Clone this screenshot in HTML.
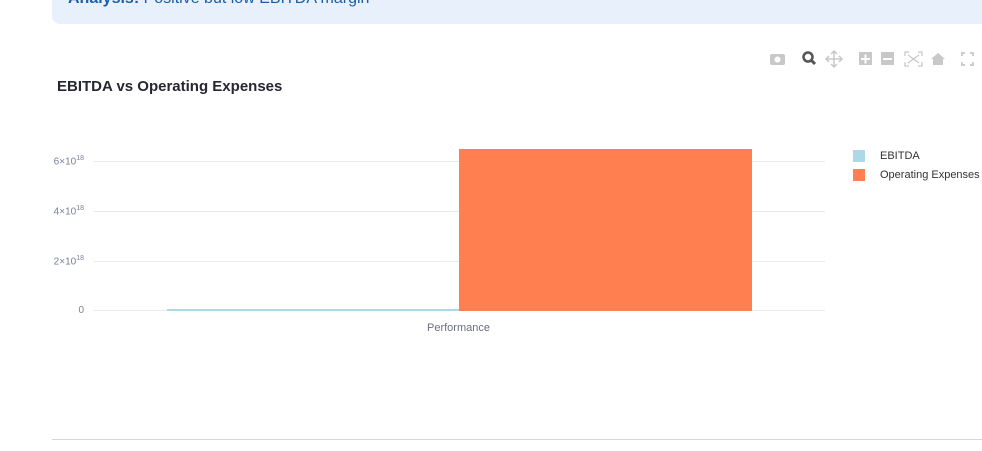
<!DOCTYPE html>
<html><head><style>
body{margin:0;width:982px;height:451px;overflow:hidden;background:#fff;font-family:"Liberation Sans",sans-serif;position:relative}
.box{position:absolute;left:52px;top:-20px;width:940px;height:44px;background:#e7f0fb;border-radius:8px}
.box span{position:absolute;left:16px;top:10px;font-size:16px;color:#1a5fa6}
.title{position:absolute;left:57px;top:78px;font-size:15px;font-weight:bold;color:#262730}
.grid{position:absolute;left:94px;width:731px;height:1px;background:#e8e8ee}
.yl{position:absolute;right:898px;font-size:10px;color:#7a7f96;text-align:right}
.yl sup{font-size:7px}
</style></head><body>
<div class="box"><span><b>Analysis:</b> Positive but low EBITDA margin</span></div>
<div class="title">EBITDA vs Operating Expenses</div>
<div class="grid" style="top:161px"></div>
<div class="grid" style="top:211px"></div>
<div class="grid" style="top:261px"></div>
<div class="grid" style="top:310px"></div>
<div class="yl" style="top:155px">6×10<sup>18</sup></div>
<div class="yl" style="top:205px">4×10<sup>18</sup></div>
<div class="yl" style="top:255px">2×10<sup>18</sup></div>
<div class="yl" style="top:305px">0</div>
<div style="position:absolute;left:167px;top:309px;width:292px;height:2px;background:#add8e6"></div>
<div style="position:absolute;left:459px;top:149px;width:293px;height:162px;background:#ff7f50"></div>
<div style="position:absolute;left:427px;top:322px;font-size:11px;color:#6b6f80">Performance</div>
<div style="position:absolute;left:853px;top:150px;width:12px;height:12px;background:#add8e6"></div>
<div style="position:absolute;left:853px;top:169px;width:12px;height:12px;background:#ff7f50"></div>
<div style="position:absolute;left:880px;top:150px;font-size:11px;color:#333">EBITDA</div>
<div style="position:absolute;left:880px;top:169px;font-size:11px;color:#333">Operating Expenses</div>
<svg style="position:absolute;left:768px;top:50px" width="210" height="18" viewBox="0 0 210 18">
<g fill="#c8c8c8">
<rect x="2" y="4" width="15" height="11" rx="2"/><circle cx="9.5" cy="9.5" r="3" fill="#fff"/>
<rect x="91" y="2" width="13" height="13"/><rect x="113" y="2" width="13" height="13"/>
<path d="M170 3 l7 6 h-2 v6 h-10 v-6 h-2z"/>
</g>
<g fill="#fff"><rect x="93" y="8" width="9" height="2"/><rect x="96.5" y="4.5" width="2" height="9"/><rect x="115" y="8" width="9" height="2"/></g>
<circle cx="40" cy="7" r="4.5" fill="none" stroke="#555" stroke-width="2.5"/><path d="M43 10 l4 4" stroke="#555" stroke-width="3"/>
<path d="M66 1v16M58 9h16M63 4l3-3 3 3M63 14l3 3 3-3M61 6l-3 3 3 3M71 6l3 3-3 3" stroke="#c8c8c8" fill="none" stroke-width="1.5"/>
<path d="M137 6v-4h4M150 2h4v4M154 12v4h-4M141 16h-4v-4M140 5l11 8M151 5l-11 8" stroke="#c8c8c8" fill="none" stroke-width="1.3"/>
<path d="M194 6v-3h3M202 3h3v3M205 12v3h-3M197 15h-3v-3" stroke="#c8c8c8" fill="none" stroke-width="1.8"/>
</svg>
<div style="position:absolute;left:52px;top:439px;width:930px;height:1px;background:#d6d6d9"></div>
</body></html>
